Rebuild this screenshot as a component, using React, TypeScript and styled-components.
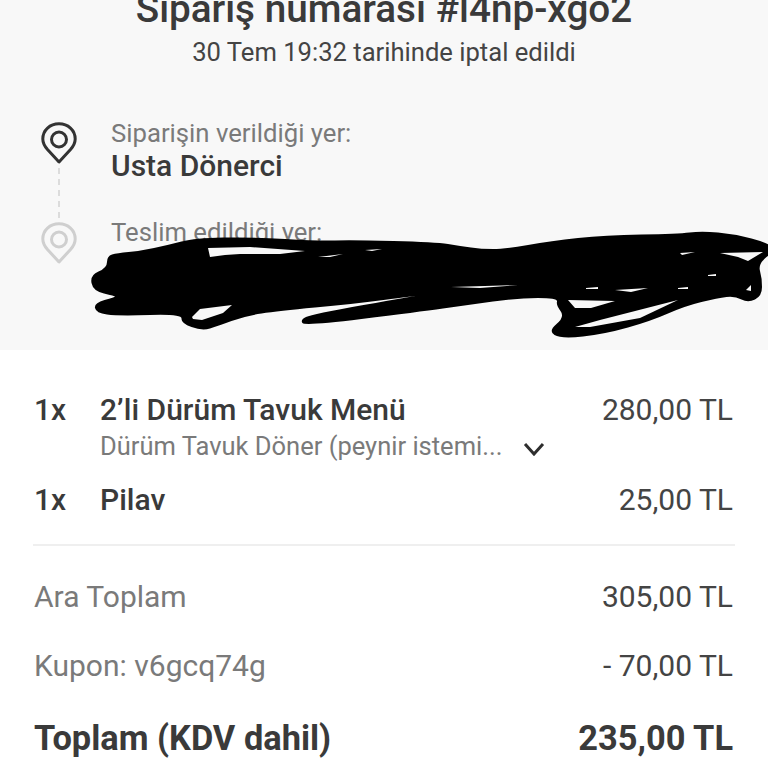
import React from "react";
import styled, { createGlobalStyle } from "styled-components";

const Global = createGlobalStyle`
  html, body { margin: 0; padding: 0; background: #fff; }
  body { width: 768px; height: 768px; overflow: hidden; font-family: Roboto, "Noto Sans", sans-serif; }
`;
const Page = styled.div`
  position: relative; width: 768px; height: 768px; overflow: hidden; background: #fff;
`;
const Summary = styled.section`
  height: 350px; background: #f8f8f8; display: flex; flex-direction: column; box-sizing: border-box;
`;
const Title = styled.h1`
  margin: -13px 0 0; font-size: 38.7px; line-height: 44px; font-weight: 500; text-align: center; color: #3a3a3a;
`;
const Subtitle = styled.p`
  margin: 6px 0 0; font-size: 25.6px; line-height: 30px; font-weight: 400; text-align: center; color: #444;
`;
const Route = styled.div`
  margin: 51px 0 0 41px; display: grid; grid-template-columns: 36px 1fr; column-gap: 34px;
`;
const Rail = styled.div`
  display: flex; flex-direction: column; align-items: center; width: 36px; padding-top: 4px;
`;
const Dash = styled.div`
  width: 0; height: 50px; margin: 4px 0 4px; border-left: 2px dashed #dcdcdc;
`;
const Places = styled.div`
  display: flex; flex-direction: column;
`;
const PlaceLabel = styled.div`
  font-size: 25.7px; line-height: 30px; color: #7a7a7a;
`;
const PlaceName = styled.div`
  font-size: 30px; line-height: 36px; font-weight: 500; color: #3a3a3a; margin-bottom: 33px;
`;
const Lines = styled.section`
  padding: 40px 35px 0 34px;
`;
const Item = styled.div`
  display: grid; grid-template-columns: 66px 1fr auto; align-items: start;
  margin-bottom: ${(p: { $gap: number }) => p.$gap}px;
`;
const Qty = styled.div`
  font-size: 30px; line-height: 40px; font-weight: 500; color: #3a3a3a;
`;
const ItemName = styled.div`
  font-size: 30px; line-height: 40px; font-weight: 500; color: #3a3a3a;
`;
const Price = styled.div`
  font-size: 30px; line-height: 40px; color: #444; text-align: right;
`;
const Options = styled.div`
  display: flex; align-items: center; gap: 21px; font-size: 25.5px; line-height: 32px; color: #7a7a7a;
`;
const ChevronBox = styled.span`
  display: flex; margin-top: 5px;
`;
const Divider = styled.hr`
  margin: 24px -2px 31px -1px; border: 0; height: 2px; background: #efefef;
`;
const TotalRow = styled.div`
  display: flex; justify-content: space-between; height: 40px; margin-bottom: 29px;
  font-size: 30px; line-height: 40px;
  &:last-child { margin-bottom: 0; }
`;
const TotalLabel = styled.span`
  color: #7a7a7a;
`;
const TotalValue = styled.span`
  color: #444;
`;
const GrandRow = styled.div`
  display: flex; justify-content: space-between; margin-top: 32px;
  font-size: 34.4px; line-height: 40px; font-weight: 700; color: #3a3a3a;
`;
const Scribble = styled.svg`
  position: absolute; left: 0; top: 0; width: 768px; height: 350px; pointer-events: none;
`;

const Pin = ({ color }: { color: string }) => (
  <svg width="36" height="42" viewBox="0 0 36 42" fill="none" stroke={color} strokeWidth="3">
    <path d="M18 40 L6.5 27.5 C3 23.5 1.8 20.5 1.8 17 C1.8 8 9 1.8 18 1.8 C27 1.8 34.2 8 34.2 17 C34.2 20.5 33 23.5 29.5 27.5 Z" strokeLinejoin="round" />
    <circle cx="18" cy="17.5" r="7.5" />
  </svg>
);

const Chevron = () => (
  <svg width="22" height="14" viewBox="0 0 22 14" fill="none" stroke="#2e2e2e" strokeWidth="3">
    <path d="M2 2 L11 12 L20 2" />
  </svg>
);

type Pt = [number, number];

// closed smooth outline: each listed point is a control point, curves pass through the midpoints
const smooth = (pts: Pt[]) => {
  const mid = (a: Pt, b: Pt): Pt => [(a[0] + b[0]) / 2, (a[1] + b[1]) / 2];
  const start = mid(pts[pts.length - 1], pts[0]);
  let d = `M${start[0]} ${start[1]}`;
  pts.forEach((p, i) => {
    const m = mid(p, pts[(i + 1) % pts.length]);
    d += ` Q${p[0]} ${p[1]} ${m[0]} ${m[1]}`;
  });
  return d + " Z";
};

const body: Pt[] = [
  [117, 253], [140, 251], [168, 245], [195, 238], [252, 237], [318, 241], [352, 240], [435, 242],
  [461, 246], [481, 249], [505, 249], [551, 241], [605, 235], [678, 234], [701, 231], [735, 234],
  [768, 243], [775, 250], [758, 264], [762, 278], [762, 296], [748, 303], [735, 296], [718, 298],
  [685, 306], [651, 321], [605, 334], [561, 339], [548, 331], [565, 317], [556, 305], [558, 298],
  [518, 298], [468, 305], [418, 312], [305, 326], [300, 320], [312, 314], [415, 296], [415, 296],
  [352, 304], [278, 311], [245, 316], [218, 326], [202, 331], [181, 323], [182, 314], [118, 316],
  [96, 313], [94, 303], [115, 297], [115, 296], [93, 291], [90, 275], [107, 268], [107, 256],
];

const holes = [
  "M208 248 L250 247 L305 251 L280 254 L240 254 L225 255 L210 257 Z",
  "M318 257 L343 254 L330 257 Z",
  "M365 250 L382 249 L372 251 Z",
  "M192 317 L200 309 L232 305 L223 313 L202 320 L193 319 Z",
  "M451 287 L518 285 L480 288 Z",
  "M615 290 L648 288 L631 292 Z",
  "M568 300 L615 301 L591 308 L575 308 Z",
  "M575 327 L600 320 L678 300 L640 318 L590 327 Z",
  "M720 253 L763 252 L748 261 L738 257 Z",
  "M746 290 L751 285 L751 291 Z",
  "M680 253 L695 252 L682 255 Z",
  "M586 288 L598 287 L598 289 L586 289 Z",
  "M678 288 L688 287 L688 289 L678 289 Z",
  "M708 275 L716 274 L716 276 L708 276 Z",
];

export default function App() {
  return (
    <Page>
      <Global />
      <Summary>
        <Title>Sipariş numarası #l4np-xgo2</Title>
        <Subtitle>30 Tem 19:32 tarihinde iptal edildi</Subtitle>
        <Route>
          <Rail>
            <Pin color="#333" />
            <Dash />
            <Pin color="#cfcfcf" />
          </Rail>
          <Places>
            <PlaceLabel>Siparişin verildiği yer:</PlaceLabel>
            <PlaceName>Usta Dönerci</PlaceName>
            <PlaceLabel>Teslim edildiği yer:</PlaceLabel>
          </Places>
        </Route>
      </Summary>
      <Lines>
        <Item $gap={18}>
          <Qty>1x</Qty>
          <div>
            <ItemName>2’li Dürüm Tavuk Menü</ItemName>
            <Options>Dürüm Tavuk Döner (peynir istemi... <ChevronBox><Chevron /></ChevronBox></Options>
          </div>
          <Price>280,00 TL</Price>
        </Item>
        <Item $gap={0}>
          <Qty>1x</Qty>
          <ItemName>Pilav</ItemName>
          <Price>25,00 TL</Price>
        </Item>
        <Divider />
        <div>
          <TotalRow><TotalLabel>Ara Toplam</TotalLabel><TotalValue>305,00 TL</TotalValue></TotalRow>
          <TotalRow><TotalLabel>Kupon: v6gcq74g</TotalLabel><TotalValue>- 70,00 TL</TotalValue></TotalRow>
        </div>
        <GrandRow><span>Toplam (KDV dahil)</span><span>235,00 TL</span></GrandRow>
      </Lines>
      <Scribble viewBox="0 0 768 350">
        <path fill="#000" d={smooth(body)} />
        {holes.map((d) => (
          <path key={d} fill="#f8f8f8" d={d} />
        ))}
      </Scribble>
    </Page>
  );
}
